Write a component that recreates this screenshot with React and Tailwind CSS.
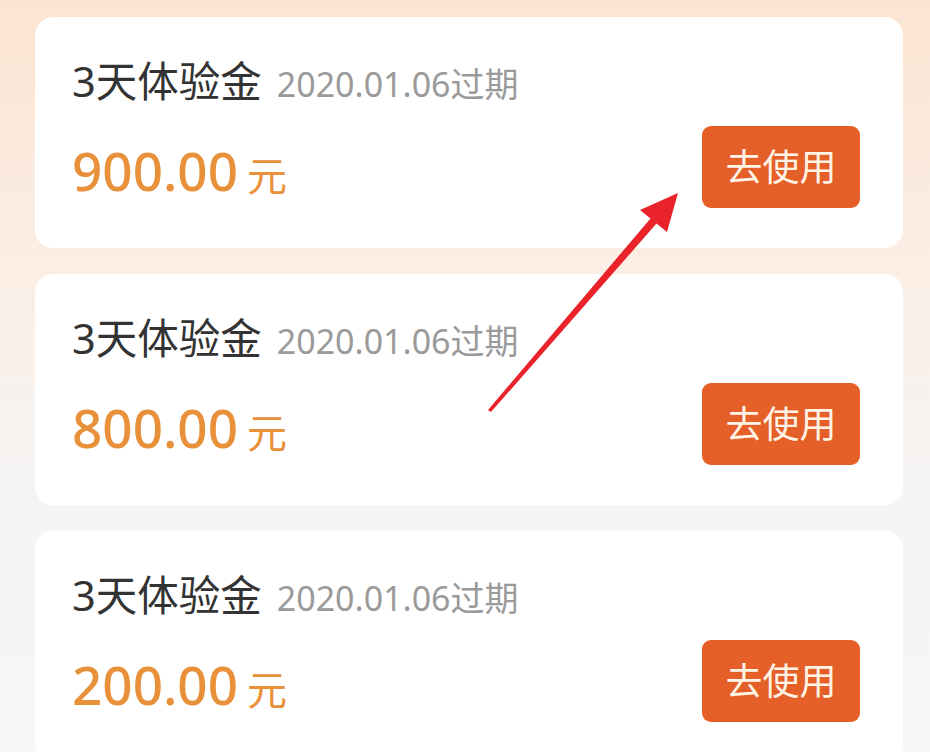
import React from "react";

const items = ["900.00", "800.00", "200.00"];

function Card({ amount }) {
  return (
    <div className="h-[231px] w-[868px] shrink-0 rounded-[18px] bg-white pl-[37px] pr-[43px] pt-[40px] flex flex-col">
      <div className="flex items-baseline h-[48px] leading-[48px]">
        <span className="text-[41.5px] text-[#333333]">3天体验金</span>
        <span className="ml-[15px] text-[34px] text-[#9a9a9a]">2020.01.06过期</span>
      </div>
      <div className="mt-[38px] flex items-center justify-between h-[60px]">
        <div className="flex items-baseline leading-[60px]">
          <span className="text-[53px] font-medium text-[#e8913a]">{amount}</span>
          <span className="ml-[9px] text-[40px] text-[#e8913a]">元</span>
        </div>
        <button className="mb-[12px] h-[82px] w-[158px] rounded-[9px] bg-[#e55f29] text-[37px] text-[#fff4e6] flex items-center justify-center">
          去使用
        </button>
      </div>
    </div>
  );
}

export default function App() {
  return (
    <div
      className="relative w-[930px] h-[752px] overflow-hidden bg-[linear-gradient(180deg,#fbe4d2_0%,#fbeee4_35%,#f6f4f3_62%,#f6f6f7_100%)]"
      style={{ fontFamily: '"Noto Sans", "Noto Sans CJK SC", sans-serif' }}
    >
      <div className="flex flex-col gap-[26px] pt-[17px] pl-[35px]">
        {items.map((a) => (
          <Card key={a} amount={a} />
        ))}
      </div>
      <svg className="absolute left-0 top-0 pointer-events-none" width="930" height="752" viewBox="0 0 930 752">
        <polygon
          points="488,410 650.5,218.4 640,210 678,193 667,232 656.5,223.6 491,412"
          fill="#ea2229"
        />
      </svg>
    </div>
  );
}
